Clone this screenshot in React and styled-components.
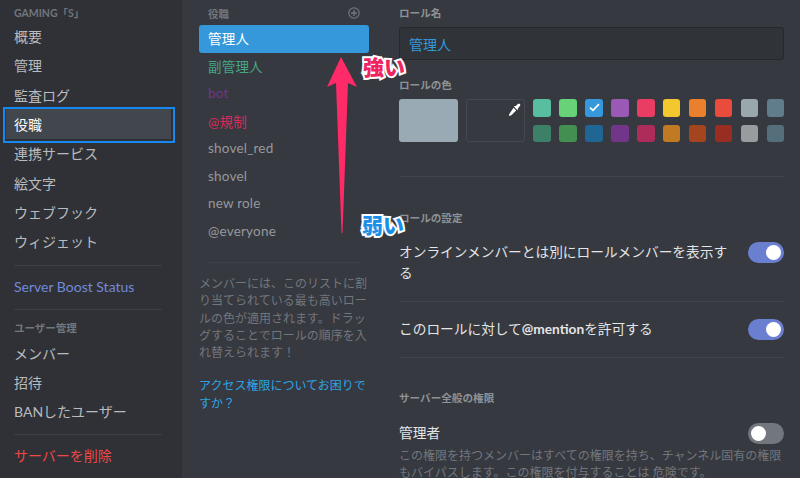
import React from "react"
import styled, { createGlobalStyle } from "styled-components"

const sidebarTop = [
  { label: "概要" },
  { label: "管理" },
  { label: "監査ログ" },
  { label: "役職", active: true },
  { label: "連携サービス" },
  { label: "絵文字" },
  { label: "ウェブフック" },
  { label: "ウィジェット" },
]

const roles = [
  { name: "管理人", color: "#ffffff", selected: true },
  { name: "副管理人", color: "#46a585" },
  { name: "bot", color: "#71368a" },
  { name: "@規制", color: "#d92a5b" },
  { name: "shovel_red", color: "#96989d" },
  { name: "shovel", color: "#96989d" },
  { name: "new role", color: "#96989d" },
  { name: "@everyone", color: "#96989d" },
]

const swatches = [
  "#59bd9f", "#67d278", "#3498db", "#9b59b6", "#ea3d63", "#f3c72e", "#ea7f2e", "#e94c3c", "#99a8ad", "#607d8b",
  "#3c8067", "#438f51", "#206694", "#71368a", "#ad2c5a", "#c07a22", "#a5451f", "#992d22", "#979c9f", "#546e7a",
]

function App() {
  return (
    <Page>
      <GlobalStyle />
      <Sidebar>
        <SideHeading>GAMING「S」</SideHeading>
        {sidebarTop.map((item) => (
          <SideItem key={item.label} $active={item.active}>{item.label}</SideItem>
        ))}
        <SideDivider $top={9} />
        <SideItem $color="#7289da">Server Boost Status</SideItem>
        <SideDivider $bottom={9} />
        <SideHeading $tight>ユーザー管理</SideHeading>
        <SideItem>メンバー</SideItem>
        <SideItem>招待</SideItem>
        <SideItem>BANしたユーザー</SideItem>
        <SideDivider $bottom={5} />
        <SideItem $color="#f04747">サーバーを削除</SideItem>
      </Sidebar>

      <RoleColumn>
        <RoleHeader>
          <span>役職</span>
          <AddIcon viewBox="0 0 12 12">
            <circle cx="6" cy="6" r="5.2" fill="none" stroke="#72767d" strokeWidth="1.2" />
            <path d="M6 3v6M3 6h6" stroke="#72767d" strokeWidth="1.4" />
          </AddIcon>
        </RoleHeader>
        {roles.map((role) => (
          <RoleRow key={role.name} $selected={role.selected} $color={role.color}>{role.name}</RoleRow>
        ))}
        <RoleDivider />
        <HelpText>メンバーには、このリストに割り当てられている最も高いロールの色が適用されます。ドラッグすることでロールの順序を入れ替えられます！</HelpText>
        <HelpLink>アクセス権限についてお困りですか？</HelpLink>
      </RoleColumn>

      <Settings>
        <Label>ロール名</Label>
        <NameInput>管理人</NameInput>
        <Label $top={16}>ロールの色</Label>
        <ColorRow>
          <BigSwatch />
          <CustomSwatch>
            <Dropper viewBox="0 0 14 14">
              <path d="M8.2 3.4 10.6 1.2c.8-.7 1.7-.6 2.2 0 .6.6.6 1.4 0 2.1L10.6 5.8l.5.6-1.1 1.1-3.5-3.5L7.6 2.9z" fill="#fff" />
              <path d="M6 5.2 8.8 8 3.6 13.1c-.5.4-1 .4-1.3.5-.4.2-.7.4-1.1.1-.4-.4-.1-.8.1-1.2.1-.3.1-.8.5-1.2z" fill="#fff" />
            </Dropper>
          </CustomSwatch>
          <SwatchGrid>
            {swatches.map((color, i) => (
              <Swatch key={i} $color={color}>
                {i === 2 && (
                  <svg width="11" height="9" viewBox="0 0 11 9">
                    <path d="M1 4.6 4 7.4 10 1.2" fill="none" stroke="#fff" strokeWidth="1.7" />
                  </svg>
                )}
              </Swatch>
            ))}
          </SwatchGrid>
        </ColorRow>
        <WideDivider $top={34} />
        <Label $top={32}>ロールの設定</Label>
        <ToggleRow $top={15}>
          <ToggleText>オンラインメンバーとは別にロールメンバーを表示する</ToggleText>
          <Toggle $on />
        </ToggleRow>
        <WideDivider $top={17} />
        <ToggleRow $top={17}>
          <ToggleText>このロールに対して<Mention>@mention</Mention>を許可する</ToggleText>
          <Toggle $on />
        </ToggleRow>
        <WideDivider $top={17} />
        <Label $top={31}>サーバー全般の権限</Label>
        <ToggleRow $top={16}>
          <ToggleText>管理者</ToggleText>
          <Toggle />
        </ToggleRow>
        <Description>この権限を持つメンバーはすべての権限を持ち、チャンネル固有の権限もバイパスします。この権限を付与することは 危険です。</Description>
      </Settings>

      <Arrow viewBox="0 0 32 180">
        <path d="M15 1 31 31 22 27 16.5 177 15.5 177 10 27 1 31z" fill="#ff2a68" />
      </Arrow>
      <Callout $top={54} $left={363} $color="#f0245f">強い</Callout>
      <Callout $top={212} $left={362} $color="#1a8fe8">弱い</Callout>
    </Page>
  )
}

export default App

const GlobalStyle = createGlobalStyle`
  html, body {
    margin: 0;
    height: 100%;
    overflow: hidden;
    background: #36393f;
  }
  * {
    box-sizing: border-box;
  }
`

const Page = styled.div`
  position: relative;
  display: flex;
  width: 800px;
  height: 478px;
  overflow: hidden;
  background: #36393f;
  font-family: Lato, "Noto Sans CJK JP", sans-serif;
`

const Sidebar = styled.nav`
  flex: none;
  display: flex;
  flex-direction: column;
  width: 182px;
  padding: 4px 0 0 6px;
  background: #2f3136;
`

const SideHeading = styled.div`
  flex: none;
  height: ${(p) => (p.$tight ? "19px" : "17.5px")};
  margin-left: 8px;
  font-size: 10.5px;
  font-weight: 700;
  line-height: 18px;
  color: #72767d;
`

const SideItem = styled.div`
  position: relative;
  flex: none;
  display: flex;
  align-items: center;
  width: 165px;
  height: 29.3px;
  padding-left: 8px;
  font-size: 14px;
  color: ${(p) => (p.$active ? "#ffffff" : p.$color || "#b9bbbe")};
  background: ${(p) => (p.$active ? "#42464d" : "transparent")};

  &::after {
    content: "";
    display: ${(p) => (p.$active ? "block" : "none")};
    position: absolute;
    inset: -2px -4px -4px -3px;
    border: 2px solid #1589f0;
  }
`

const SideDivider = styled.div`
  flex: none;
  width: 148px;
  height: 1px;
  margin: ${(p) => p.$top || 8}px 0 ${(p) => p.$bottom || 6}px 8px;
  background: #3b3e44;
`

const RoleColumn = styled.section`
  flex: none;
  width: 187px;
  padding: 4px 0 0 17px;
  display: flex;
  flex-direction: column;
`

const RoleHeader = styled.div`
  display: flex;
  align-items: center;
  justify-content: space-between;
  width: 170px;
  height: 18px;
  padding: 0 9px;
  margin-bottom: 3px;
  font-size: 10.5px;
  font-weight: 700;
  color: #72767d;
`

const AddIcon = styled.svg`
  width: 12px;
  height: 12px;
`

const RoleRow = styled.div`
  display: flex;
  align-items: center;
  width: 170px;
  height: 27.5px;
  padding: 0 0 1px 9px;
  font-size: 13.5px;
  letter-spacing: 0.2px;
  color: ${(p) => p.$color};
  border-radius: 3px;
  background: ${(p) => (p.$selected ? "#3498db" : "transparent")};
`

const RoleDivider = styled.div`
  width: 152px;
  height: 1px;
  margin: 17px 0 12px 9px;
  background: #3f4248;
`

const HelpText = styled.p`
  width: 170px;
  margin: 0;
  font-size: 12px;
  line-height: 17.3px;
  color: #72767d;
`

const HelpLink = styled.a`
  display: block;
  width: 170px;
  margin-top: 16px;
  font-size: 12px;
  line-height: 17.3px;
  color: #2fa3e6;
`

const Settings = styled.section`
  flex: none;
  width: 431px;
  padding: 4px 16px 0 30px;
`

const Label = styled.div`
  height: 18px;
  margin-top: ${(p) => p.$top || 0}px;
  font-size: 10.6px;
  font-weight: 700;
  line-height: 18px;
  color: #8e9297;
`

const NameInput = styled.div`
  display: flex;
  align-items: center;
  height: 33px;
  margin-top: 5px;
  padding-left: 9px;
  font-size: 14px;
  color: #3498db;
  background: #303338;
  border: 1px solid #26282c;
  border-radius: 3px;
`

const ColorRow = styled.div`
  display: flex;
  gap: 8px;
  margin-top: 5px;
`

const BigSwatch = styled.div`
  width: 60px;
  height: 43px;
  background: #99aab5;
  border-radius: 3px;
`

const CustomSwatch = styled.div`
  position: relative;
  width: 60px;
  height: 43px;
  border: 1px solid #45484e;
  border-radius: 3px;
`

const Dropper = styled.svg`
  position: absolute;
  top: 3px;
  right: 3px;
  width: 13px;
  height: 13px;
`

const SwatchGrid = styled.div`
  display: grid;
  grid-template-columns: repeat(10, 17.5px);
  grid-auto-rows: 17.5px;
  gap: 8px 8.4px;
`

const Swatch = styled.div`
  display: flex;
  align-items: center;
  justify-content: center;
  background: ${(p) => p.$color};
  border-radius: 3px;
`

const WideDivider = styled.div`
  height: 1px;
  margin-top: ${(p) => p.$top}px;
  background: #42454b;
`

const ToggleRow = styled.div`
  display: flex;
  align-items: flex-start;
  justify-content: space-between;
  margin-top: ${(p) => p.$top}px;
`

const ToggleText = styled.div`
  width: 335px;
  height: 100%;
  margin-top: -1px;
  margin-bottom: 1px;
  font-size: 13.7px;
  line-height: 21px;
  color: #e4e5e6;
`

const Mention = styled.span`
  font-weight: 700;
`

const Toggle = styled.div`
  position: relative;
  flex: none;
  width: 36px;
  height: 21px;
  border-radius: 11px;
  background: ${(p) => (p.$on ? "#6a7fd0" : "#72767d")};

  &::after {
    content: "";
    position: absolute;
    top: 3px;
    left: ${(p) => (p.$on ? "18px" : "3px")};
    width: 15px;
    height: 15px;
    border-radius: 50%;
    background: #ffffff;
  }
`

const Description = styled.p`
  margin: 3px 0 0;
  font-size: 12px;
  line-height: 17px;
  color: #72767d;
`

const Arrow = styled.svg`
  position: absolute;
  top: 56px;
  left: 326px;
  width: 32px;
  height: 180px;
`

const Callout = styled.div`
  position: absolute;
  top: ${(p) => p.$top}px;
  left: ${(p) => p.$left}px;
  font-size: 21px;
  font-weight: 900;
  line-height: 26px;
  color: ${(p) => p.$color};
  -webkit-text-stroke: 4px #ffffff;
  paint-order: stroke fill;
`
